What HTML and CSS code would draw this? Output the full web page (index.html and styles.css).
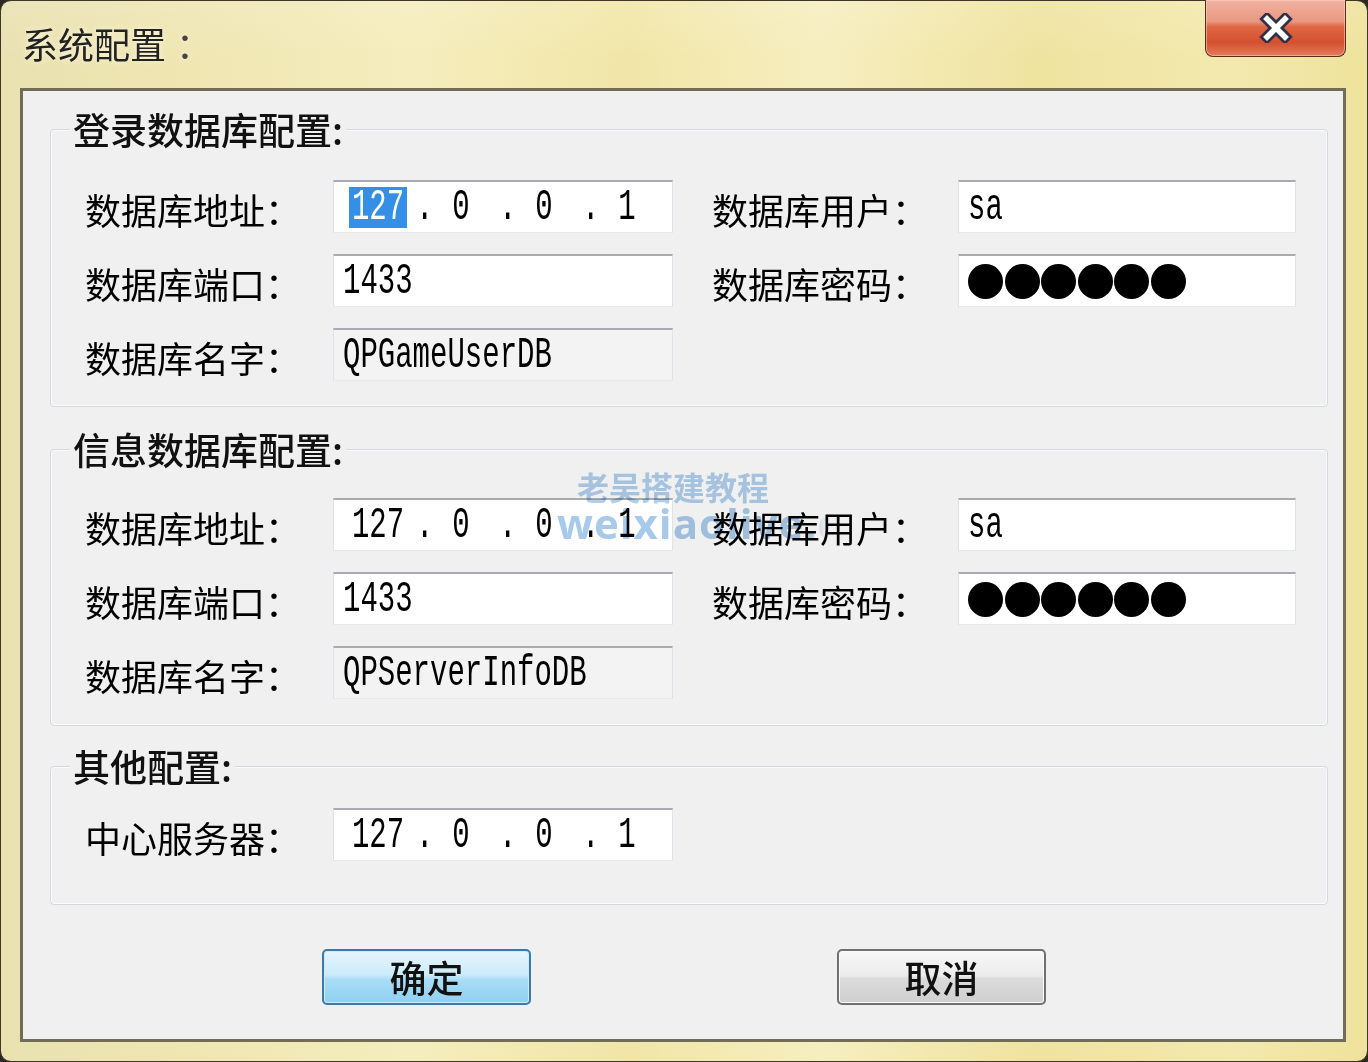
FILE: index.html
```html
<!DOCTYPE html>
<html lang="zh-CN">
<head>
<meta charset="utf-8">
<title>系统配置</title>
<link rel="stylesheet" href="styles.css">
</head>
<body>
<div class="window">
  <div class="titlebar">
    <div class="title">系统配置<span class="colon">：</span></div>
    <button class="close" aria-label="关闭">
      <svg width="36" height="30" viewBox="0 0 36 30">
        <path d="M9 6 L27 24 M27 6 L9 24" stroke="#2f3147" stroke-width="11" stroke-linecap="square" fill="none"/>
        <path d="M9 6 L27 24 M27 6 L9 24" stroke="#ffffff" stroke-width="5.5" stroke-linecap="square" fill="none"/>
      </svg>
    </button>
  </div>
  <div class="client">
    <fieldset class="group g1">
      <legend>登录数据库配置:</legend>
      <div class="grid">
        <div class="lbl">数据库地址：</div>
        <div class="field ip"><span class="seg sel"><span class="t">127</span></span><span class="dot"><span class="t">.</span></span><span class="seg"><span class="t">0</span></span><span class="dot"><span class="t">.</span></span><span class="seg"><span class="t">0</span></span><span class="dot"><span class="t">.</span></span><span class="seg"><span class="t">1</span></span></div>
        <div class="lbl r">数据库用户：</div>
        <div class="field txt"><span class="t">sa</span></div>
        <div class="lbl">数据库端口：</div>
        <div class="field txt"><span class="t">1433</span></div>
        <div class="lbl r">数据库密码：</div>
        <div class="field pw"><i></i><i></i><i></i><i></i><i></i><i></i></div>
        <div class="lbl">数据库名字：</div>
        <div class="field txt ro"><span class="t">QPGameUserDB</span></div>
      </div>
    </fieldset>
    <fieldset class="group g2">
      <legend>信息数据库配置:</legend>
      <div class="grid">
        <div class="lbl">数据库地址：</div>
        <div class="field ip"><span class="seg"><span class="t">127</span></span><span class="dot"><span class="t">.</span></span><span class="seg"><span class="t">0</span></span><span class="dot"><span class="t">.</span></span><span class="seg"><span class="t">0</span></span><span class="dot"><span class="t">.</span></span><span class="seg"><span class="t">1</span></span></div>
        <div class="lbl r">数据库用户：</div>
        <div class="field txt"><span class="t">sa</span></div>
        <div class="lbl">数据库端口：</div>
        <div class="field txt"><span class="t">1433</span></div>
        <div class="lbl r">数据库密码：</div>
        <div class="field pw"><i></i><i></i><i></i><i></i><i></i><i></i></div>
        <div class="lbl">数据库名字：</div>
        <div class="field txt ro"><span class="t">QPServerInfoDB</span></div>
      </div>
    </fieldset>
    <fieldset class="group g3">
      <legend>其他配置:</legend>
      <div class="grid">
        <div class="lbl">中心服务器：</div>
        <div class="field ip"><span class="seg"><span class="t">127</span></span><span class="dot"><span class="t">.</span></span><span class="seg"><span class="t">0</span></span><span class="dot"><span class="t">.</span></span><span class="seg"><span class="t">0</span></span><span class="dot"><span class="t">.</span></span><span class="seg"><span class="t">1</span></span></div>
      </div>
    </fieldset>
    <div class="buttons">
      <button class="btn primary">确定</button>
      <button class="btn">取消</button>
    </div>
  </div>
  <div class="wm wm1">老吴搭建教程</div>
  <div class="wm wm2">weixiaolive.com</div>
</div>
</body>
</html>
```

FILE: styles.css
```css
* { box-sizing: border-box; }
html, body { margin: 0; padding: 0; }
body {
  width: 1368px;
  height: 1062px;
  overflow: hidden;
  background: #2b2a22;
  font-family: "Noto Sans CJK SC", "Noto Sans", sans-serif;
}
.window {
  position: relative;
  width: 1368px;
  height: 1062px;
  border: 1px solid #3b3828;
  border-radius: 11px;
  padding: 0 21px 19px 19px;
  display: flex;
  flex-direction: column;
  background:
    linear-gradient(180deg, rgba(255,255,255,0.12) 0, rgba(255,255,255,0) 60px),
    linear-gradient(90deg, #e9e1b0 0%, #efe6b2 14%, #f5edbd 30%, #f1e6a8 46%, #f6eebf 60%, #efe3a0 76%, #f3e9ae 90%, #eee29c 100%);
}
.titlebar {
  height: 87px;
  display: flex;
  justify-content: space-between;
  align-items: flex-start;
}
.title {
  margin-top: 20px;
  margin-left: 2px;
  font-size: 36px;
  line-height: 44px;
  color: #222;
  text-shadow: 0 0 6px rgba(255, 252, 230, 0.9);
}
.title .colon { padding-left: 10px; color: #444; }
.close {
  margin-top: -1px;
  width: 141px;
  height: 57px;
  padding: 0;
  border: 1px solid #5b2a1e;
  border-top: none;
  border-radius: 0 0 8px 8px;
  display: flex;
  align-items: center;
  justify-content: center;
  background: linear-gradient(180deg, #f0b3a2 0%, #e99880 38%, #df6745 48%, #d4502f 75%, #e37a5c 100%);
  box-shadow: inset 0 0 0 1px rgba(255, 210, 190, 0.55);
}
.client {
  height: 954px;
  border: 3px solid #716c57;
  background: #f0f0f0;
}
.group {
  margin: 0 0 0 27px;
  width: 1278px;
  min-inline-size: 0;
  padding: 0 0 25px 0;
  border: 1px solid #d5d9dd;
  border-radius: 4px;
  box-shadow: inset 0 0 0 1px #fbfbfb;
}
.group legend {
  margin-left: 19px;
  padding: 0 3px;
  font-size: 37px;
  line-height: 40px;
  height: 40px;
  font-weight: 500;
  color: #111;
  background: #f0f0f0;
}
.g1 { margin-top: 18px; }
.g1 .grid { padding-top: 31px; }
.g2 { margin-top: 22px; padding-bottom: 26px; }
.g2 .grid { padding-top: 29px; }
.g3 { margin-top: 20px; padding-bottom: 43px; }
.g3 .grid { padding-top: 22px; }
.grid {
  display: grid;
  grid-template-columns: 248px 340px 285px 338px;
  grid-auto-rows: 53px;
  row-gap: 21px;
  padding-left: 34px;
}
.lbl {
  font-size: 36px;
  line-height: 53px;
  padding-top: 3px;
  color: #000;
  white-space: nowrap;
}
.lbl.r { padding-left: 39px; }
.field {
  height: 53px;
  border: 1px solid;
  border-color: #a9abb0 #dfe2e6 #e6e9ec #dfe2e6;
  border-top-width: 2px;
  background: #fff;
  display: flex;
  align-items: center;
  font-family: "Liberation Mono", "DejaVu Sans Mono", monospace;
  font-size: 29px;
  color: #000;
  white-space: nowrap;
}
.t {
  display: inline-block;
  transform: scaleY(1.5);
  line-height: 1;
}
.txt { padding: 0 9px; }
.ro { background: #f3f3f3; }
.ip { padding-left: 15px; }
.seg {
  display: inline-block;
  width: 58px;
  height: 41px;
  line-height: 41px;
  text-align: center;
}
.seg.sel { background: #3390e6; color: #fff; }
.dot {
  display: inline-block;
  width: 25px;
  padding-left: 9px;
}
.pw { padding-left: 9px; gap: 1.5px; }
.pw i {
  display: block;
  width: 35px;
  height: 35px;
  border-radius: 50%;
  background: #000;
}
.buttons {
  display: flex;
  gap: 306px;
  padding-left: 299px;
  margin-top: 44px;
}
.btn {
  width: 209px;
  height: 56px;
  padding: 0;
  font-family: "Noto Sans CJK SC", sans-serif;
  font-size: 37px;
  font-weight: 500;
  line-height: 50px;
  color: #111;
  border: 2px solid #707070;
  border-radius: 5px;
  background: linear-gradient(180deg, #f7f7f7 0%, #ececec 48%, #dcdcdc 52%, #cfcfcf 100%);
  box-shadow: inset 0 0 0 1px #fbfbfb;
}
.btn.primary {
  border-color: #3a7bab;
  background: linear-gradient(180deg, #e6f5fc 0%, #cdebf9 45%, #aadcf5 55%, #8fd0f1 100%);
  box-shadow: inset 0 0 0 1px #c8ecfb;
}
.wm {
  position: absolute;
  mix-blend-mode: multiply;
  font-weight: 700;
  white-space: nowrap;
}
.wm1 {
  left: 576px;
  top: 465px;
  font-size: 32px;
  line-height: 40px;
  color: #b0cfec;
}
.wm2 {
  left: 556px;
  top: 499px;
  font-family: "Open Sans", sans-serif;
  font-size: 42px;
  line-height: 46px;
  letter-spacing: 1px;
  color: #a8caea;
  -webkit-mask-image: linear-gradient(90deg, #000 0, #000 250px, transparent 270px);
  mask-image: linear-gradient(90deg, #000 0, #000 250px, transparent 270px);
}
```
